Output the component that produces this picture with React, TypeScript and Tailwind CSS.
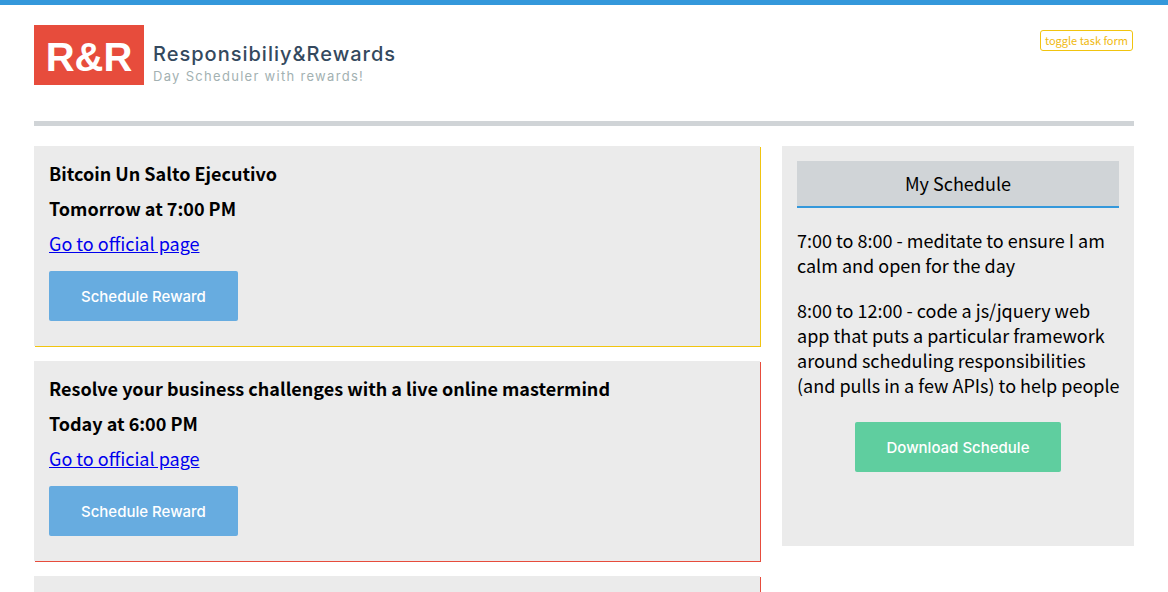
type Tone = "soon" | "urgent";
type Reward = { title: string; time: string; tone: Tone };

const rewards: Reward[] = [
  { title: "Bitcoin Un Salto Ejecutivo", time: "Tomorrow at 7:00 PM", tone: "soon" },
  {
    title: "Resolve your business challenges with a live online mastermind",
    time: "Today at 6:00 PM",
    tone: "urgent",
  },
];

const shadows: Record<Tone, string> = {
  soon: "shadow-[1px_1px_0_#f1c40f]",
  urgent: "shadow-[1px_1px_0_#e74c3c]",
};

function RewardCard({ title, time, tone }: Reward) {
  return (
    <article className={`flex flex-col items-start bg-[#ebebeb] px-[15px] pt-[15px] pb-[25px] ${shadows[tone]}`}>
      <h2 className="mb-2.5 font-bold">{title}</h2>
      <p className="mb-2.5 font-bold">{time}</p>
      <a href="#official" className="mb-[15px] text-[#0000ee] underline">
        Go to official page
      </a>
      <button
        type="button"
        className="h-[50px] rounded-xs bg-[#67ace0] px-8 font-['Inter',sans-serif] text-[15px] font-medium text-white"
      >
        Schedule Reward
      </button>
    </article>
  );
}

export default function App() {
  return (
    <div className="min-h-screen border-t-5 border-[#3498db] bg-white px-[34px] font-['Noto_Sans_CJK_SC',sans-serif] text-[18px] leading-[25px] text-black">
      <header className="flex items-start justify-between border-b-5 border-[#d0d4d7] pt-5 pb-[35px]">
        <div className="flex items-start gap-[9px]">
          <div className="flex h-[60px] w-[110px] items-center justify-center bg-[#e74c3c] pt-1 font-['Liberation_Sans',sans-serif] text-[40px] font-bold text-white">
            R&amp;R
          </div>
          <div className="pt-[17px] font-['Inter',sans-serif]">
            <h1 className="text-xl leading-6 font-medium tracking-wider text-[#34495e]">
              Responsibiliy&amp;Rewards
            </h1>
            <p className="text-[13px] leading-5 tracking-widest text-[#a3b1b2]">
              Day Scheduler with rewards!
            </p>
          </div>
        </div>
        <button
          type="button"
          className="mt-[5px] mr-px rounded-[3px] border border-[#f1c40f] px-1 text-[11px] leading-[19px] text-[#f0b90f]"
        >
          toggle task form
        </button>
      </header>

      <div className="mt-5 grid grid-cols-[33fr_16fr] items-start gap-[22px]">
        <main className="flex flex-col gap-[15px]">
          {rewards.map((reward) => (
            <RewardCard key={reward.title} {...reward} />
          ))}
          <article className={`h-4 bg-[#ebebeb] ${shadows.urgent}`} />
        </main>
        <aside className="flex min-h-[400px] flex-col bg-[#ebebeb] p-[15px]">
          <h2 className="border-b-2 border-[#3498db] bg-[#d0d4d7] py-2.5 text-center">My Schedule</h2>
          <div className="-mr-1 flex flex-col gap-5 pt-5">
            <p>7:00 to 8:00 - meditate to ensure I am calm and open for the day</p>
            <p>
              8:00 to 12:00 - code a js/jquery web app that puts a particular framework around scheduling
              responsibilities (and pulls in a few APIs) to help people
            </p>
          </div>
          <button
            type="button"
            className="mt-6 h-[50px] self-center rounded-xs bg-[#5fce9f] px-8 font-['Inter',sans-serif] text-[15px] font-medium text-white"
          >
            Download Schedule
          </button>
        </aside>
      </div>
    </div>
  );
}
